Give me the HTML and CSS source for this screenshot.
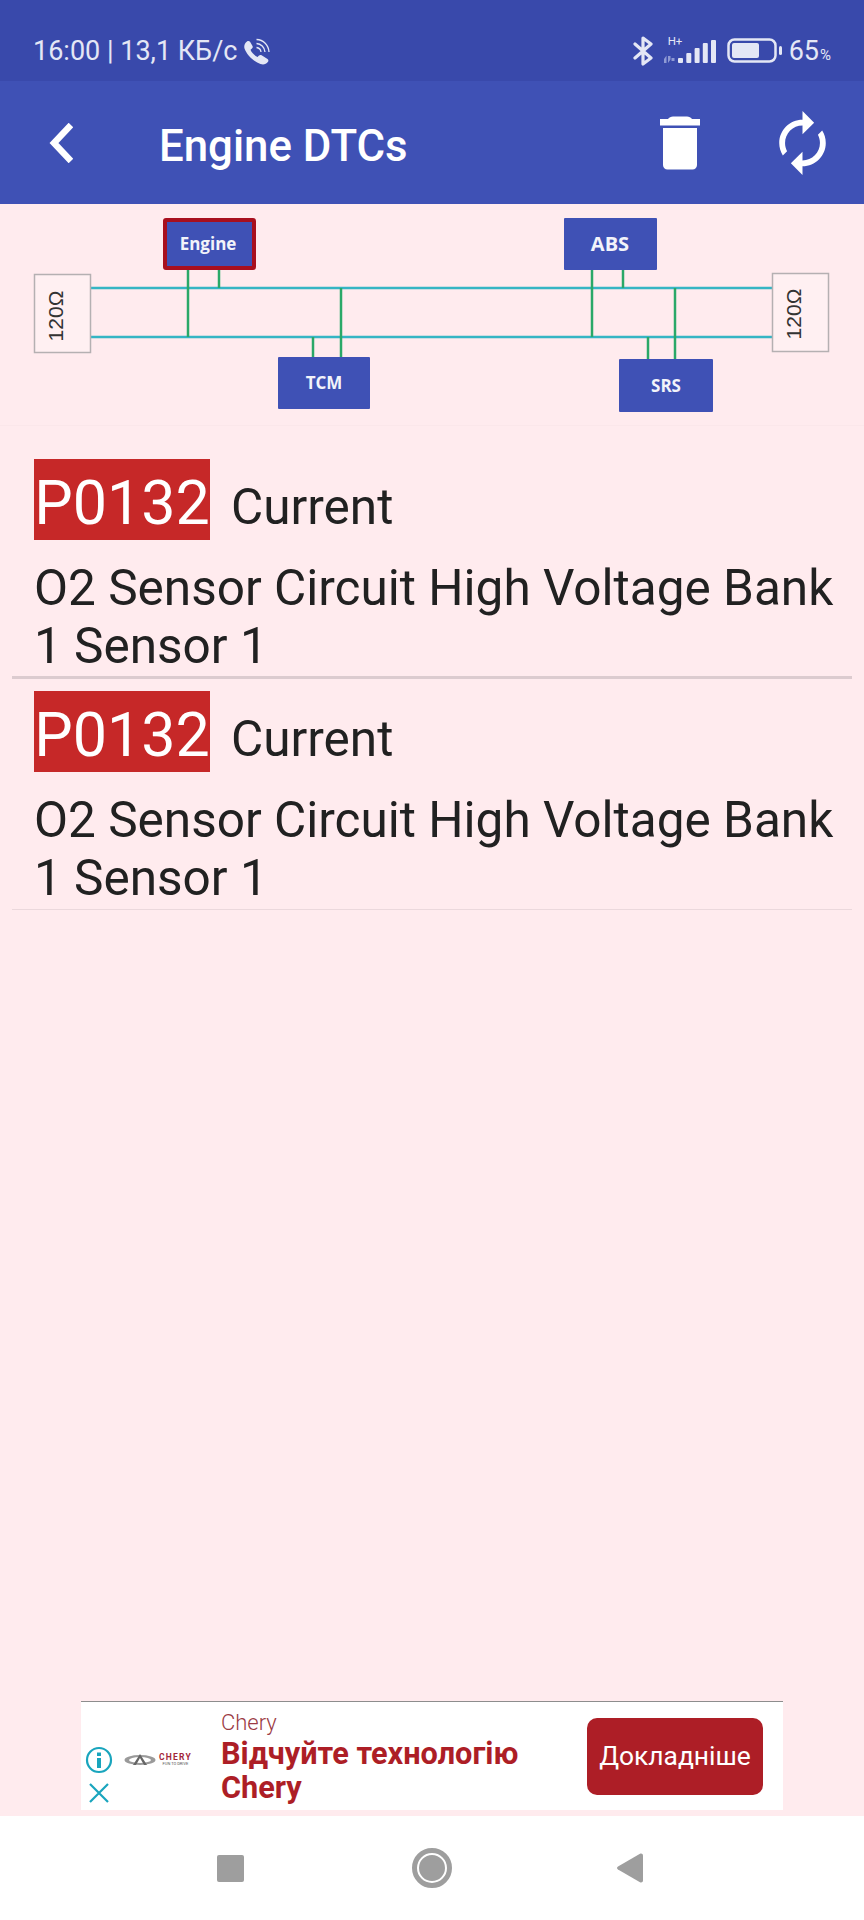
FILE: index.html
```html
<!DOCTYPE html>
<html lang="en">

    <head>
        <meta charset="UTF-8">
        <meta name="viewport" content="width=device-width, initial-scale=1.0">
        <title>Engine DTCs</title>
        <link rel="stylesheet" href="styles.css">
    </head>

    <body>
        <div class="status-bar">
            <div class="status-left">
                <span>16:00 | 13,1 КБ/с</span>
                <svg class="icon-call" viewBox="0 0 27 27" width="27" height="27">
                    <path d="M4 3.500C5 2.800 6.500 3 7.200 4L9.500 8C10 9 9.800 10 9 10.600L7.500 11.800C8.800 15 11.500 17.500 14.500 19L16 17.500C16.800 16.800 17.800 16.700 18.600 17.300L24.500 21C25.500 21.800 25.700 23 25 23.800C23 26.300 20.500 27 17.500 26C10.500 23.500 3.500 16.500 1.500 10.500C.7 8 1.800 5 4 3.500z" fill="#e4e7f5" />
                    <path d="M13.500 9.500C16 9.800 17.700 11.500 18 14M13.500 5.500C18 5.800 21.500 9.200 22 14M13.500 1.500C20.500 1.800 25.500 7 26 14" fill="none" stroke="#e4e7f5" stroke-width="1.300" />
                </svg>
            </div>
            <div class="status-right">
                <svg class="icon-bt" viewBox="0 0 21 30" width="21" height="30">
                    <path d="M2 8l16 14-8 6V2l8 6L2 22" fill="none" stroke="#e4e7f5" stroke-width="3.200" stroke-linejoin="round" stroke-linecap="round" />
                </svg>
                <div class="signal">
                    <span class="signal-type">H+</span>
                    <svg viewBox="0 0 54 25" width="54" height="25">
                        <path d="M1 20l2.500-3.500V24H1zM5 17h2.500v3.500L5 24zM8.500 19h3v3h-3z" fill="#8f9ad4" />
                        <rect x="15" y="19" width="5" height="5" rx="1" fill="#e4e7f5" />
                        <rect x="23.300" y="14" width="5" height="10" rx="1" fill="#e4e7f5" />
                        <rect x="31.600" y="9" width="5" height="15" rx="1" fill="#e4e7f5" />
                        <rect x="39.800" y="4" width="5" height="20" rx="1" fill="#e4e7f5" />
                        <rect x="48" y="1" width="5" height="23" rx="1" fill="#e4e7f5" />
                    </svg>
                </div>
                <svg class="icon-battery" viewBox="0 0 56 26" width="56" height="26">
                    <rect x="1.500" y="1.500" width="47" height="22" rx="6" fill="none" stroke="#e4e7f5" stroke-width="2.500" />
                    <rect x="5" y="5" width="27" height="15" rx="2" fill="#e4e7f5" />
                    <rect x="52" y="8" width="3" height="9" rx="1.500" fill="#e4e7f5" />
                </svg>
                <span class="battery-text">65<small>%</small></span>
            </div>
        </div>

        <header class="app-bar">
            <svg class="icon-back" viewBox="0 0 24 40" width="24" height="40">
                <path d="M22 2L5 20l17 18" fill="none" stroke="#fff" stroke-width="6.500" />
            </svg>
            <h1>Engine DTCs</h1>
            <svg class="icon-trash" viewBox="0 0 42 54" width="42" height="54">
                <path d="M9 3C10 1.500 12 .5 14 .5h14c2 0 4 1 5 2.500h8v6.500H1V3z" fill="#fff" />
                <path d="M4 12h34v37c0 2.500-2 4.500-4.500 4.500h-25C6 53.500 4 51.500 4 49z" fill="#fff" />
            </svg>
            <svg class="icon-sync" viewBox="0 0 16 22" width="47" height="64">
                <g transform="translate(20 -1) scale(-1 1)">
                    <path d="M12 4V1L8 5l4 4V6c3.310 0 6 2.690 6 6 0 1.010-.25 1.970-.7 2.800l1.460 1.460C19.540 15.030 20 13.570 20 12c0-4.420-3.580-8-8-8zm0 14c-3.310 0-6-2.690-6-6 0-1.010.25-1.970.7-2.800L5.240 7.740C4.460 8.970 4 10.430 4 12c0 4.420 3.580 8 8 8v3l4-4-4-4v3z" fill="#fff" />
                </g>
            </svg>
        </header>

        <section class="diagram">
            <!-- viewBox matches the page, so node coords are read straight off the screen -->
            <svg viewBox="0 204 864 221" width="864" height="221">
                <g class="bus">
                    <line x1="91" y1="288" x2="772" y2="288" />
                    <line x1="91" y1="337" x2="772" y2="337" />
                </g>
                <g class="stub">
                    <line x1="188" y1="269" x2="188" y2="337" />
                    <line x1="219" y1="269" x2="219" y2="288" />
                    <line x1="341" y1="288" x2="341" y2="357" />
                    <line x1="313" y1="337" x2="313" y2="357" />
                    <line x1="592" y1="269" x2="592" y2="337" />
                    <line x1="623" y1="269" x2="623" y2="288" />
                    <line x1="675" y1="288" x2="675" y2="359" />
                    <line x1="648" y1="337" x2="648" y2="359" />
                </g>
                <rect class="resistor" x="34.500" y="274.500" width="56" height="78" />
                <rect class="resistor" x="772.500" y="273.500" width="56" height="78" />
                <text class="resistor-text" transform="translate(63 316) rotate(-90)">120Ω</text>
                <text class="resistor-text" transform="translate(801 314) rotate(-90)">120Ω</text>

                <rect class="node node-active" x="165" y="220" width="89" height="48" rx="1" />
                <rect class="node" x="564" y="218" width="93" height="52" rx="1" />
                <rect class="node" x="278" y="357" width="92" height="52" rx="1" />
                <rect class="node" x="619" y="359" width="94" height="53" rx="1" />
                <text class="node-text" x="208" y="250">Engine</text>
                <text class="node-text node-text-big" x="610" y="251">ABS</text>
                <text class="node-text" x="324" y="389">TCM</text>
                <text class="node-text" x="666" y="392">SRS</text>
            </svg>
        </section>

        <main class="dtc-list">
            <article class="dtc dtc-first">
                <div class="dtc-head">
                    <span class="dtc-code">P0132</span>
                    <span class="dtc-state">Current</span>
                </div>
                <p class="dtc-desc">O2 Sensor Circuit High Voltage Bank 1 Sensor 1</p>
            </article>
            <article class="dtc">
                <div class="dtc-head">
                    <span class="dtc-code">P0132</span>
                    <span class="dtc-state">Current</span>
                </div>
                <p class="dtc-desc">O2 Sensor Circuit High Voltage Bank 1 Sensor 1</p>
            </article>
        </main>

        <aside class="ad">
            <div class="ad-icons">
                <svg viewBox="0 0 28 28" width="28" height="28">
                    <circle cx="14" cy="14" r="12" fill="none" stroke="#19a5bd" stroke-width="2.200" />
                    <rect x="12" y="12" width="4" height="10" fill="#19a5bd" />
                    <rect x="12" y="6.500" width="4" height="3.500" fill="#19a5bd" />
                </svg>
                <svg viewBox="0 0 22 22" width="22" height="22">
                    <path d="M2 2l18 18M20 2L2 20" stroke="#19a5bd" stroke-width="2.200" fill="none" />
                </svg>
            </div>
            <div class="ad-logo">
                <svg viewBox="0 0 32 14" width="32" height="14">
                    <ellipse cx="16" cy="7" rx="15.500" ry="5" fill="#9a9a9a" />
                    <ellipse cx="16" cy="7" rx="11" ry="3" fill="#fff" />
                    <path d="M16 1L9 12h3l4-7 4 7h3z" fill="#666" />
                </svg>
                <div class="ad-logo-text">
                    <span class="ad-logo-name">CHERY</span>
                    <span class="ad-logo-tag">FUN TO DRIVE</span>
                </div>
            </div>
            <div class="ad-copy">
                <div class="ad-brand">Chery</div>
                <div class="ad-headline">Відчуйте технологію Chery</div>
            </div>
            <button class="ad-btn">Докладніше</button>
        </aside>

        <nav class="nav-bar">
            <span class="nav-square"></span>
            <span class="nav-circle"></span>
            <svg viewBox="0 0 26 30" width="26" height="30">
                <path d="M1 13.500L23 .8c1.500-.8 3 .2 3 1.700v25c0 1.500-1.500 2.500-3 1.700L1 16.500c-1.300-.8-1.300-2.200 0-3z" fill="#9e9e9e" />
            </svg>
        </nav>
    </body>

</html>
```

FILE: styles.css
```css
:root {
    --status-color: #3949ab;
    --primary-color: #3f51b5;
    --bg-light: #ffebee;
    --text-color: #212121;
    --code-color: #c62828;
    --ad-red: #ad1e26;
}

*,
*::before,
*::after {
    box-sizing: border-box;
}

body {
    margin: 0;
    width: 864px;
    height: 1920px;
    display: flex;
    flex-direction: column;
    font-family: Roboto, sans-serif;
    background: var(--bg-light);
    color: var(--text-color);
    overflow: hidden;
}

/* status bar */
.status-bar {
    height: 81px;
    flex: none;
    display: flex;
    justify-content: space-between;
    padding: 0 33px 0 33px;
    background: var(--status-color);
    color: #e4e7f5;
}

.status-left {
    display: flex;
    align-items: center;
    gap: 6px;
    padding-top: 21px;
    font-size: 27px;
}

.status-right {
    display: flex;
    align-items: center;
    padding-top: 21px;
}

.icon-bt {
    margin-right: 9px;
}

.signal {
    position: relative;
    width: 54px;
    height: 25px;
    margin-right: 10px;
}

.signal svg {
    display: block;
}

.signal-type {
    position: absolute;
    left: 5px;
    top: -3px;
    font-size: 11.5px;
    line-height: 1;
}

.icon-battery {
    margin-right: 6px;
}

.battery-text {
    font-size: 27px;
}

.battery-text small {
    margin-left: 1px;
    font-size: 15px;
}

/* app bar */
.app-bar {
    height: 123px;
    flex: none;
    display: flex;
    align-items: center;
    padding: 0 38px 0 49px;
    background: var(--primary-color);
    color: white;
}

.app-bar h1 {
    flex: 1;
    margin: 6px 0 0 86px;
    font-size: 43.800px;
    font-weight: 500;
}

.icon-trash {
    margin-right: 78px;
}

/* can bus diagram */
.diagram {
    height: 222px;
    flex: none;
    border-bottom: 1px solid #fbe7ea;
}

.diagram svg {
    display: block;
}

.bus line {
    stroke: #35b5c4;
    stroke-width: 2.500;
}

.stub line {
    stroke: #2aa868;
    stroke-width: 2.500;
}

.resistor {
    fill: #fff0f2;
    stroke: #b5b0b2;
    stroke-width: 1.500;
}

.resistor-text {
    font-family: "Liberation Sans", sans-serif;
    font-size: 21px;
    fill: #333;
    text-anchor: middle;
}

.node {
    fill: var(--primary-color);
}

.node-active {
    stroke: #a80f1e;
    stroke-width: 4;
}

.node-text {
    font-family: "Open Sans", sans-serif;
    font-size: 17px;
    font-weight: 700;
    fill: #f2f3fa;
    text-anchor: middle;
}

.node-text-big {
    font-size: 20px;
}

/* dtc rows */
.dtc-list {
    flex: 1;
    padding: 0 12px;
}

.dtc {
    height: 231px;
    padding: 12px 10px 0 22px;
    border-bottom: 1px solid #ebd8dc;
    font-size: 49.5px;
}

.dtc-first {
    height: 253px;
    padding-top: 33px;
    border-bottom: 3px solid #dccbcf;
}

.dtc-head {
    display: flex;
    align-items: baseline;
    gap: 21px;
}

.dtc-code {
    width: 176px;
    height: 81px;
    line-height: 89px;
    text-align: center;
    font-size: 61px;
    background: var(--code-color);
    color: white;
}

.dtc-desc {
    margin: 19px 0 0;
    line-height: 58px;
}

/* ad banner */
.ad {
    height: 109px;
    flex: none;
    display: flex;
    align-items: stretch;
    margin: 0 81px 6px;
    padding: 0 20px 0 0;
    background: white;
    border-top: 1px solid #8d8d8d;
}

.ad-icons {
    width: 43px;
    padding: 44px 0 0 4px;
    display: flex;
    flex-direction: column;
    align-items: flex-start;
    gap: 8px;
}

.ad-icons svg {
    display: block;
}

.ad-icons svg + svg {
    margin-left: 3px;
}

.ad-logo {
    width: 97px;
    display: flex;
    align-items: center;
    gap: 3px;
    padding-top: 7px;
}

.ad-logo-text {
    display: flex;
    flex-direction: column;
    align-items: center;
    line-height: 1;
}

.ad-logo-name {
    font-size: 8.500px;
    font-weight: 700;
    letter-spacing: 1.200px;
    color: #a3263a;
}

.ad-logo-tag {
    font-size: 4px;
    color: #555;
}

.ad-copy {
    flex: 1;
    padding-top: 8px;
}

.ad-brand {
    font-size: 22px;
    font-weight: 300;
    color: #9b3a44;
}

.ad-headline {
    margin-top: 2px;
    font-size: 30.700px;
    font-weight: 700;
    line-height: 34px;
    color: var(--ad-red);
}

.ad-btn {
    align-self: center;
    flex: none;
    width: 176px;
    height: 77px;
    padding: 0;
    border: none;
    border-radius: 10px;
    font-family: inherit;
    font-size: 26.400px;
    background: var(--ad-red);
    color: white;
}

/* android nav */
.nav-bar {
    height: 104px;
    flex: none;
    display: flex;
    align-items: center;
    justify-content: space-between;
    padding: 0 221px 0 217px;
    background: white;
}

.nav-square {
    width: 27px;
    height: 27px;
    border-radius: 2px;
    background: #9e9e9e;
}

.nav-circle {
    width: 30px;
    height: 30px;
    margin-left: 3px;
    border-radius: 50%;
    background: #9e9e9e;
    border: 2px solid white;
    outline: 5px solid #9e9e9e;
}
```
